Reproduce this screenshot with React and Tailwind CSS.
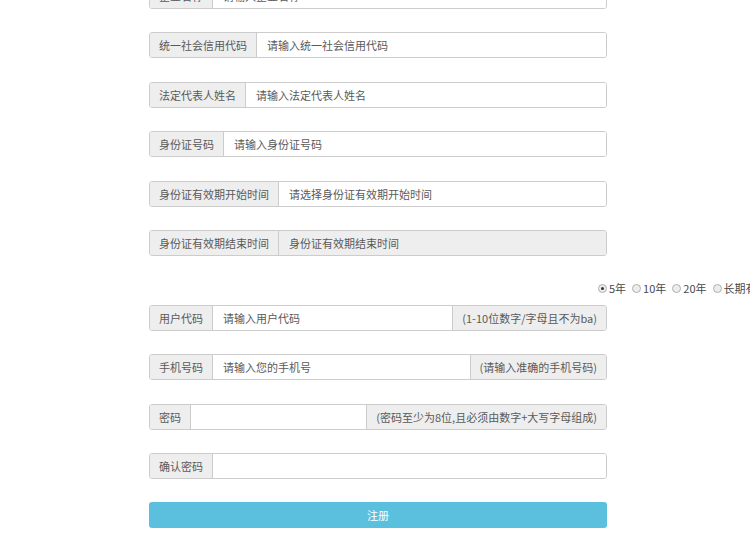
import React from "react";

const font = { fontFamily: '"Noto Sans CJK SC", "Noto Sans", sans-serif' };

function Label({ children }) {
  return (
    <div className="flex items-center px-[9px] bg-[#eeeeee] border-r border-[#cccccc] text-[#5a5a5a] whitespace-nowrap">
      {children}
    </div>
  );
}

function Addon({ children }) {
  return (
    <div className="flex items-center px-[9px] bg-[#eeeeee] border-l border-[#cccccc] text-[#5a5a5a] whitespace-nowrap">
      {children}
    </div>
  );
}

function Row({ label, placeholder, addon, disabled, mt }) {
  return (
    <div className={`flex h-[26px] border border-[#cccccc] rounded-[3px] overflow-hidden text-[11px] ${mt}`}>
      <Label>{label}</Label>
      <div className={`flex-1 flex items-center px-[10px] text-[#5a5a5a] whitespace-nowrap ${disabled ? "bg-[#eeeeee]" : "bg-white"}`}>
        {placeholder}
      </div>
      {addon && <Addon>{addon}</Addon>}
    </div>
  );
}

function Radio({ checked, children }) {
  return (
    <div className="flex items-center gap-[2px]">
      <span className="w-[9px] h-[9px] rounded-full border border-[#b0b0b0] bg-[#ececec] flex items-center justify-center">
        {checked && <span className="w-[3px] h-[3px] rounded-full bg-[#333333]" />}
      </span>
      <span>{children}</span>
    </div>
  );
}

export default function App() {
  return (
    <div className="w-[750px] h-[538px] overflow-hidden bg-white" style={font}>
      <div className="w-[458px] ml-[149px] flex flex-col">
        <Row mt="mt-[-17px]" label="企业名称" placeholder="请输入企业名称" />
        <Row mt="mt-[23px]" label="统一社会信用代码" placeholder="请输入统一社会信用代码" />
        <Row mt="mt-[24px]" label="法定代表人姓名" placeholder="请输入法定代表人姓名" />
        <Row mt="mt-[23px]" label="身份证号码" placeholder="请输入身份证号码" />
        <Row mt="mt-[24px]" label="身份证有效期开始时间" placeholder="请选择身份证有效期开始时间" />
        <Row mt="mt-[23px]" label="身份证有效期结束时间" placeholder="身份证有效期结束时间" disabled />
      </div>
      <div className="ml-[598px] mt-[25px] h-[14px] flex items-center gap-[6px] text-[11px] text-[#4a4a4a] whitespace-nowrap">
        <Radio checked>5年</Radio>
        <Radio>10年</Radio>
        <Radio>20年</Radio>
        <Radio>长期有效</Radio>
      </div>
      <div className="w-[458px] ml-[149px] flex flex-col">
        <Row mt="mt-[10px]" label="用户代码" placeholder="请输入用户代码" addon="(1-10位数字/字母且不为ba)" />
        <Row mt="mt-[23px]" label="手机号码" placeholder="请输入您的手机号" addon="(请输入准确的手机号码)" />
        <Row mt="mt-[24px]" label="密码" placeholder="" addon="(密码至少为8位,且必须由数字+大写字母组成)" />
        <Row mt="mt-[23px]" label="确认密码" placeholder="" />
        <button className="mt-[23px] h-[26px] rounded-[3px] bg-[#5bc0de] text-white text-[11px]">注册</button>
      </div>
    </div>
  );
}
